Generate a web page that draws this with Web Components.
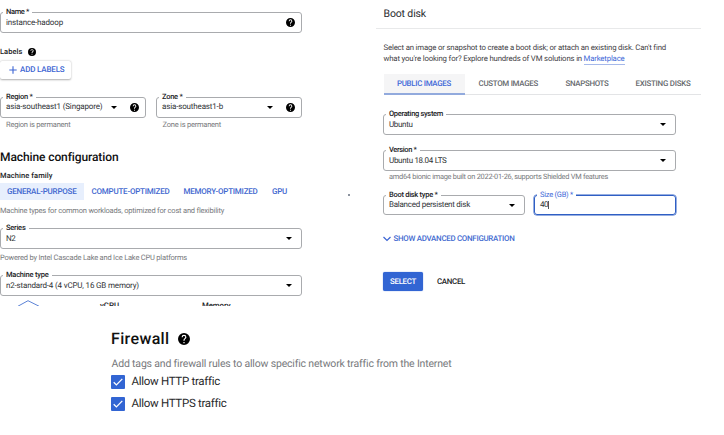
<!DOCTYPE html>
<html lang="en">
<head>
<meta charset="utf-8">
<title>Create instance</title>
<style>
body{margin:0;background:#fff;font-family:Roboto,"Liberation Sans",sans-serif;color:#202124;text-rendering:geometricPrecision}
</style>
</head>
<body>
<instance-page></instance-page>
<script>
const define = (name, html, ready) => {
  const template = document.createElement('template');
  customElements.define(name, class extends HTMLElement {
    connectedCallback() {
      if (this.shadowRoot) return;
      const root = this.attachShadow({ mode: 'open' });
      template.innerHTML = typeof html === 'function' ? html(this) : html;
      root.append(template.content.cloneNode(true));
      if (ready) ready(this, root);
    }
  });
};

// One line of text, tracked so that it spans the width given in "w".
define('ui-text', `<style>
  :host{display:block;white-space:nowrap;line-height:1;flex:none;font-size:var(--fs,7.5px)}
  span{display:inline-block;font-variant-ligatures:none}
</style><span><slot></slot></span>`, (host, root) => {
  const w = parseFloat(host.getAttribute('w'));
  const span = root.querySelector('span');
  const natural = span.getBoundingClientRect().width;
  if (w && natural) span.style.letterSpacing = ((w - natural) / host.textContent.length).toFixed(3) + 'px';
});

define('help-icon', `<style>:host{display:block;width:9px;height:9px;flex:none}svg{display:block;width:100%;height:100%}</style>
<svg viewBox="2 2 20 20"><path fill="#000" d="M12 2a10 10 0 1 0 0 20 10 10 0 0 0 0-20zm1 17h-2v-2h2zm2.070-7.750-.9.920C13.450 12.900 13 13.500 13 15h-2v-.5c0-1.100.450-2.100 1.170-2.830l1.240-1.260A2 2 0 1 0 10 9H8a4 4 0 1 1 8 0c0 .880-.360 1.680-.930 2.250z"/></svg>`);

define('drop-arrow', `<style>:host{display:block;width:6px;height:3px;flex:none}svg{display:block}</style>
<svg width="6" height="3" viewBox="0 0 6 3"><path d="M0 0h6L3 3z"/></svg>`);

// Outlined field with its label set in a notch of the top edge.
define('form-field', h => `<style>
  :host{display:block;box-sizing:border-box;position:relative;height:21px;flex:none;border:1px solid #a9abae;border-radius:3px}
  :host([focused]){height:20px;border:1.5px solid #2f5fc4;box-shadow:0 0 0 .5px #2f5fc4}
  .label{position:absolute;left:2px;top:-5px;padding:0 3px;background:#fff;font-weight:500;--fs:7.5px}
  :host([focused]) .label{color:#4169d8;font-weight:400}
  .value{display:flex;align-items:center;height:100%;padding:0 6px 0 5px;color:#303336;--fs:8px}
  .gap{flex:1}
  drop-arrow{margin-right:3px}
  :host([help]) drop-arrow{margin-right:13px}
  .caret{width:1px;height:8px;background:#555}
</style>
<div class="label"><ui-text w="${h.getAttribute('lw')}">${h.getAttribute('label')}</ui-text></div>
<div class="value"><ui-text w="${h.getAttribute('vw')}">${h.getAttribute('value')}</ui-text>${h.hasAttribute('focused') ? '<i class="caret"></i>' : ''}<span class="gap"></span>${h.hasAttribute('select') ? '<drop-arrow></drop-arrow>' : ''}${h.hasAttribute('help') ? '<help-icon></help-icon>' : ''}</div>`);

define('check-row', `<style>
  :host{display:flex;align-items:center;gap:6.5px;height:14px;color:#28292b;--fs:11.5px}
  svg{display:block;flex:none}
</style><svg width="14" height="14" viewBox="0 0 14 14"><rect width="14" height="14" rx="1" fill="#3265d3"/><path d="M2.700 7.200 5.400 9.900 11.300 3.900" fill="none" stroke="#fff" stroke-width="1.300"/></svg><slot></slot>`);

define('machine-panel', `<style>
  :host{display:block;width:302px;height:306px;overflow:hidden;padding-top:12px;box-sizing:border-box}
  .row{display:flex;align-items:center}
  .hint{color:#77797c;--fs:7.5px;display:flex;align-items:center;height:10px}
  .strong{font-weight:500}
  .add{width:71px;height:18px;box-sizing:border-box;padding-left:9px;gap:3px;border-radius:2px;box-shadow:0 .5px 2px rgba(0,0,0,.32);color:#3c65d3;font-weight:500;--fs:8px}
  .tabs{height:17px;color:#4167cf;font-weight:500;--fs:8px}
  .tabs div{display:flex;align-items:center;height:100%;box-sizing:border-box}
  .on{background:#e7effd;width:84px;padding-left:7px}
</style>
<form-field label="Name *" lw="23" value="instance-hadoop" vw="57" help></form-field>
<div class="row strong" style="height:10px;margin-top:14px;gap:5px"><ui-text w="22.500">Labels</ui-text><help-icon style="width:8px;height:8px"></help-icon></div>
<div class="row add" style="margin-top:4px"><svg width="8" height="8" viewBox="0 0 8 8"><path d="M4 .3v7.400M.3 4h7.400" stroke="#3c65d3" stroke-width="1.100"/></svg><ui-text w="44.500">ADD LABELS</ui-text></div>
<div class="row" style="margin-top:17.500px;gap:10px"><form-field style="width:146px" label="Region *" lw="26.500" value="asia-southeast1 (Singapore)" vw="96.500" select help></form-field><form-field style="width:146px" label="Zone *" lw="20.500" value="asia-southeast1-b" vw="61" select help></form-field></div>
<div class="row hint" style="margin-top:2px;gap:92px;padding-left:6px"><ui-text w="64.500">Region is permanent</ui-text><ui-text w="58.500">Zone is permanent</ui-text></div>
<div class="row strong" style="height:16px;margin-top:19.500px;color:#111;--fs:12px"><ui-text w="118.500">Machine configuration</ui-text></div>
<div class="row strong" style="height:10px;margin-top:6px"><ui-text w="52.500">Machine family</ui-text></div>
<div class="row tabs" style="margin-top:2px"><div class="on"><ui-text w="69.500">GENERAL-PURPOSE</ui-text></div><div style="width:93px;padding-left:7.500px"><ui-text w="78">COMPUTE-OPTIMIZED</ui-text></div><div style="width:95px;padding-left:6.500px"><ui-text w="74">MEMORY-OPTIMIZED</ui-text></div><ui-text w="15">GPU</ui-text></div>
<div class="hint" style="margin-top:6px"><ui-text w="224">Machine types for common workloads, optimized for cost and flexibility</ui-text></div>
<form-field style="margin-top:12px" label="Series" lw="19.500" value="N2" vw="9.500" select></form-field>
<div class="hint" style="margin-top:4px"><ui-text w="187">Powered by Intel Cascade Lake and Ice Lake CPU platforms</ui-text></div>
<form-field style="margin-top:12px" label="Machine type" lw="42.500" value="n2-standard-4 (4 vCPU, 16 GB memory)" vw="133" select></form-field>
<div class="row strong" style="align-items:flex-start;margin-top:4px;padding-left:18px;--fs:7.800px"><svg width="22" height="12" viewBox="0 0 22 12"><path d="M0 6.200 10 .7l11 5.500v6" fill="none" stroke="#5b82d6" stroke-width="1"/></svg><ui-text w="19" style="margin:1.500px 0 0 60px">vCPU</ui-text><ui-text w="28.500" style="margin:1.500px 0 0 83px">Memory</ui-text></div>`);

define('disk-panel', `<style>
  :host{display:block;width:325px;height:306px;box-sizing:border-box}
  .title{display:flex;align-items:center;height:28px;padding-left:7.500px;border-bottom:1px solid #e8e9ea;--fs:10.5px;color:#292b2e}
  .body{padding-left:7px}
  .row{display:flex;align-items:center}
  .copy{color:#3f4145;height:11.500px;padding-left:.5px;--fs:7.800px}
  .link{color:#4169d8;border-bottom:1px solid #a6b9ea;padding-bottom:1px;margin:1px 0 0 1.500px}
  .tabs{height:21px;border-bottom:1px solid #e3e4e6;box-sizing:border-box;margin-left:.5px;margin-top:9px;--fs:7.900px;color:#66696d;font-weight:500}
  .tabs div{display:flex;align-items:center;height:21px;box-sizing:border-box}
  .on{width:81px;padding:2px 0 0 13.500px;background:#f5f5f6;border-bottom:2px solid #92aadd;color:#4169d8}
  .select{display:flex;align-items:center;justify-content:center;width:40px;height:19px;border-radius:2px;background:#3265d3;color:#fff;box-shadow:0 0 1px #3265d3}
</style>
<div class="title"><ui-text w="42.500">Boot disk</ui-text></div>
<div class="body">
<div class="row copy" style="margin-top:13px"><ui-text w="282.500">Select an image or snapshot to create a boot disk; or attach an existing disk. Can't find</ui-text></div>
<div class="row copy"><ui-text w="198.500">what you're looking for? Explore hundreds of VM solutions in</ui-text><span class="link"><ui-text w="41">Marketplace</ui-text></span></div>
<div class="row tabs"><div class="on"><ui-text w="54">PUBLIC IMAGES</ui-text></div><ui-text w="59.500" style="margin-left:14px">CUSTOM IMAGES</ui-text><ui-text w="43" style="margin-left:27.500px">SNAPSHOTS</ui-text><ui-text w="55" style="margin-left:27px">EXISTING DISKS</ui-text></div>
<form-field style="margin:19px 25px 0 0" label="Operating system" lw="54" value="Ubuntu" vw="23.500" select></form-field>
<form-field style="margin:15px 25px 0 0" label="Version *" lw="27.500" value="Ubuntu 18.04 LTS" vw="57.500" select></form-field>
<div class="row" style="height:10px;margin-top:1px;padding-left:6px;color:#77797c;--fs:7.400px"><ui-text w="219">amd64 bionic image built on 2022-01-26, supports Shielded VM features</ui-text></div>
<div class="row" style="margin-top:13px;gap:9px"><form-field style="width:142px;height:20px" label="Boot disk type *" lw="48.500" value="Balanced persistent disk" vw="81" select></form-field><form-field style="width:142px" label="Size (GB) *" lw="33" value="40" vw="8" focused></form-field></div>
<div class="row" style="height:12px;margin-top:17.500px;gap:2.500px;color:#4169d0;font-weight:500;--fs:7.900px"><svg width="8" height="6" viewBox="0 0 8 6"><path d="m.5 1 3.500 3.500L7.500 1" fill="none" stroke="#3c65d3" stroke-width="1.200"/></svg><ui-text w="121">SHOW ADVANCED CONFIGURATION</ui-text></div>
<div class="row" style="margin-top:27.500px;gap:14px;font-weight:500;--fs:7.900px"><span class="select"><ui-text w="26">SELECT</ui-text></span><ui-text w="28">CANCEL</ui-text></div>
</div>`);

define('firewall-panel', `<style>
  :host{display:block;padding:22px 0 0 111px}
  .row{display:flex;align-items:center}
</style>
<div class="row" style="height:22px;gap:8px;font-weight:500;color:#111;--fs:16px"><ui-text w="58.500">Firewall</ui-text><help-icon style="width:12px;height:12px"></help-icon></div>
<div class="row" style="height:14px;margin-top:7.500px;padding-left:.5px;color:#77797c;--fs:10.500px"><ui-text w="340">Add tags and firewall rules to allow specific network traffic from the Internet</ui-text></div>
<check-row style="margin-top:3.500px"><ui-text w="88.500">Allow HTTP traffic</ui-text></check-row>
<check-row style="margin-top:8px"><ui-text w="95">Allow HTTPS traffic</ui-text></check-row>`);

define('instance-page', `<style>
  :host{display:block;width:724px;height:435px;overflow:hidden;background:#fff}
  .top{display:flex}
  .gutter{width:74px;height:306px;box-sizing:border-box;padding:194px 0 0 46px}
  .gutter i{display:block;width:2px;height:2px;background:#8b929e}
</style>
<div class="top"><machine-panel></machine-panel><div class="gutter"><i></i></div><disk-panel></disk-panel></div>
<firewall-panel></firewall-panel>`);
</script>
</body>
</html>
